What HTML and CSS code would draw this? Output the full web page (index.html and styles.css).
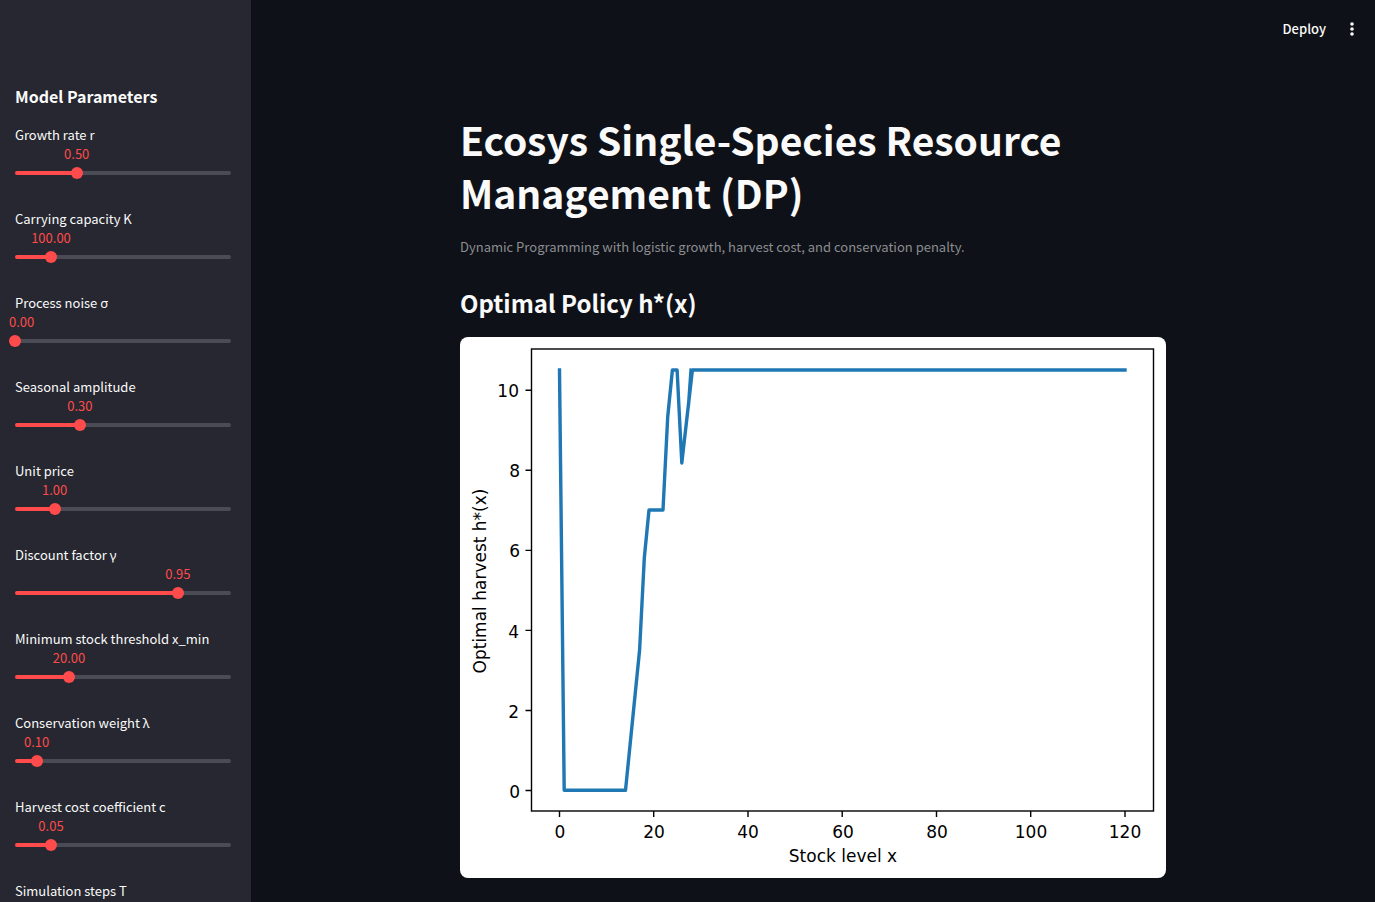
FILE: index.html
```html
<!DOCTYPE html>
<html lang="en">
<head>
<meta charset="utf-8">
<meta name="viewport" content="width=device-width, initial-scale=1">
<title>Ecosys Single-Species Resource Management (DP)</title>
<link rel="stylesheet" href="styles.css">
</head>
<body>
<div class="app">
  <aside class="sidebar">
    <h2 class="sidebar-title">Model Parameters</h2>
    <form class="params">
      <div class="param" style="--pos: 28.57%">
        <label class="param-label" for="r">Growth rate r</label>
        <output class="param-value" for="r">0.50</output>
        <div class="slider"><span class="track"></span><input id="r" type="range" min="0.1" max="1.5" step="0.01" value="0.5"></div>
      </div>
      <div class="param" style="--pos: 16.67%">
        <label class="param-label" for="k">Carrying capacity K</label>
        <output class="param-value" for="k">100.00</output>
        <div class="slider"><span class="track"></span><input id="k" type="range" min="50" max="350" step="1" value="100"></div>
      </div>
      <div class="param" style="--pos: 0%">
        <label class="param-label" for="sigma">Process noise <span class="greek">σ</span></label>
        <output class="param-value at-start" for="sigma">0.00</output>
        <div class="slider"><span class="track"></span><input id="sigma" type="range" min="0" max="1" step="0.01" value="0"></div>
      </div>
      <div class="param" style="--pos: 30%">
        <label class="param-label" for="amp">Seasonal amplitude</label>
        <output class="param-value" for="amp">0.30</output>
        <div class="slider"><span class="track"></span><input id="amp" type="range" min="0" max="1" step="0.01" value="0.3"></div>
      </div>
      <div class="param" style="--pos: 18.37%">
        <label class="param-label" for="price">Unit price</label>
        <output class="param-value" for="price">1.00</output>
        <div class="slider"><span class="track"></span><input id="price" type="range" min="0.1" max="5" step="0.01" value="1"></div>
      </div>
      <div class="param" style="--pos: 75.38%">
        <label class="param-label" for="gamma">Discount factor <span class="greek">γ</span></label>
        <output class="param-value" for="gamma">0.95</output>
        <div class="slider"><span class="track"></span><input id="gamma" type="range" min="0.8" max="0.999" step="0.001" value="0.95"></div>
      </div>
      <div class="param" style="--pos: 25%">
        <label class="param-label" for="xmin">Minimum stock threshold x_min</label>
        <output class="param-value" for="xmin">20.00</output>
        <div class="slider"><span class="track"></span><input id="xmin" type="range" min="0" max="80" step="1" value="20"></div>
      </div>
      <div class="param" style="--pos: 10%">
        <label class="param-label" for="lambda">Conservation weight <span class="greek">λ</span></label>
        <output class="param-value" for="lambda">0.10</output>
        <div class="slider"><span class="track"></span><input id="lambda" type="range" min="0" max="1" step="0.01" value="0.1"></div>
      </div>
      <div class="param" style="--pos: 16.67%">
        <label class="param-label" for="cost">Harvest cost coefficient c</label>
        <output class="param-value" for="cost">0.05</output>
        <div class="slider"><span class="track"></span><input id="cost" type="range" min="0" max="0.3" step="0.01" value="0.05"></div>
      </div>
      <div class="param">
        <label class="param-label" for="steps">Simulation steps T</label>
        <div class="slider"><input id="steps" type="range" min="0" max="200" step="1" value="50"></div>
      </div>
    </form>
  </aside>
  <div class="main">
    <header class="toolbar">
      <button class="deploy" type="button">Deploy</button>
      <button class="menu" type="button" aria-label="Main menu">
        <svg width="20" height="20" viewBox="0 0 20 20" fill="currentColor"><circle cx="10" cy="5" r="1.8"/><circle cx="10" cy="10" r="1.8"/><circle cx="10" cy="15" r="1.8"/></svg>
      </button>
    </header>
    <main class="content">
      <h1 class="title">Ecosys Single-Species Resource Management (DP)</h1>
      <p class="caption">Dynamic Programming with logistic growth, harvest cost, and conservation penalty.</p>
      <h2 class="subtitle">Optimal Policy h*(x)</h2>
      <svg class="chart" viewBox="0 0 706 541" role="img" aria-label="Optimal harvest by stock level">
        <rect class="frame" x="71.5" y="12" width="622" height="462"/>
        <path class="ticks" d="M99.5 474v6M193.7 474v6M288 474v6M382.2 474v6M476.5 474v6M570.7 474v6M665 474v6M71.5 453.5h-6M71.5 373.5h-6M71.5 293.4h-6M71.5 213.4h-6M71.5 133.3h-6M71.5 53.3h-6"/>
        <g class="x-labels">
          <text x="100" y="501">0</text><text x="194" y="501">20</text><text x="288" y="501">40</text><text x="383" y="501">60</text><text x="477" y="501">80</text><text x="571" y="501">100</text><text x="665" y="501">120</text>
          <text x="383" y="525">Stock level x</text>
          <text transform="translate(26 244) rotate(-90)">Optimal harvest h*(x)</text>
        </g>
        <g class="y-labels">
          <text x="60" y="461">0</text><text x="59" y="381">2</text><text x="59" y="301">4</text><text x="60" y="220">6</text><text x="60" y="140">8</text><text x="59" y="60">10</text>
        </g>
        <path class="line" d="M99.5 33L104.2 453.3H165.5L179.6 313L184.3 221L189 173H203L207.7 80L212.4 33H217.1L221.8 126L232.4 33H665M231 33L228.6 67"/>
      </svg>
    </main>
  </div>
</div>
</body>
</html>
```
FILE: styles.css
```css
* { box-sizing: border-box; }

body {
  margin: 0;
  background: #0e1117;
  color: #fafafa;
  font-family: "Noto Sans CJK SC", "Noto Sans", sans-serif;
}

h1, h2, p { margin: 0; }

.app {
  display: flex;
  height: 100vh;
  overflow: hidden;
}

.sidebar {
  flex: 0 0 251px;
  padding: 83px 20px 0 15px;
  background: #262730;
  overflow: hidden;
}

.sidebar-title {
  font-size: 16px;
  line-height: 26px;
  font-weight: 700;
}

.params {
  display: grid;
  gap: 26px;
  margin-top: 16px;
}

.param {
  display: flex;
  flex-direction: column;
}

.param-label {
  font-size: 13px;
  line-height: 20px;
  white-space: nowrap;
}

.greek {
  font-family: "Noto Sans", sans-serif;
  line-height: 1;
}

.param-value {
  width: max-content;
  margin-left: var(--pos);
  transform: translateX(-50%);
  color: #ff4b4b;
  font-size: 13px;
  line-height: 18px;
}

.param-value.at-start {
  margin-left: -6px;
  transform: none;
}

.slider {
  display: grid;
  align-items: center;
  height: 20px;
}

.track, .slider input { grid-area: 1 / 1; }

.track {
  height: 4px;
  border-radius: 2px;
  background: linear-gradient(to right, #ff4b4b var(--pos), #4a4b54 var(--pos));
}

.slider input {
  appearance: none;
  height: 12px;
  margin: 0 -6px;
  background: transparent;
}

.slider input::-webkit-slider-thumb {
  appearance: none;
  width: 12px;
  height: 12px;
  border-radius: 50%;
  background: #ff4b4b;
}

.main {
  flex: 1;
  min-width: 0;
  overflow: hidden;
}

.toolbar {
  display: flex;
  align-items: center;
  justify-content: flex-end;
  gap: 16px;
  height: 57px;
  padding: 0 13px;
}

.toolbar button {
  display: flex;
  padding: 0;
  border: 0;
  background: none;
  color: inherit;
  font: inherit;
  font-size: 13px;
  font-weight: 500;
}

.content {
  max-width: 706px;
  margin: 0 auto;
  padding-top: 56px;
}

.title {
  font-size: 39px;
  line-height: 53px;
  font-weight: 700;
}

.caption {
  margin-top: 17px;
  color: #8b8d91;
  font-size: 13px;
  line-height: 22px;
}

.subtitle {
  margin-top: 28px;
  font-size: 24px;
  line-height: 34px;
  font-weight: 700;
}

.chart {
  display: block;
  width: 100%;
  margin-top: 17px;
  border-radius: 8px;
  background: #fff;
  font-family: "DejaVu Sans", sans-serif;
  font-size: 17px;
}

.frame, .ticks { fill: none; stroke: #000; stroke-width: 1.4; }
.line { fill: none; stroke: #1f77b4; stroke-width: 3.4; stroke-linejoin: round; stroke-linecap: square; }
.x-labels { text-anchor: middle; }
.y-labels { text-anchor: end; }
```
